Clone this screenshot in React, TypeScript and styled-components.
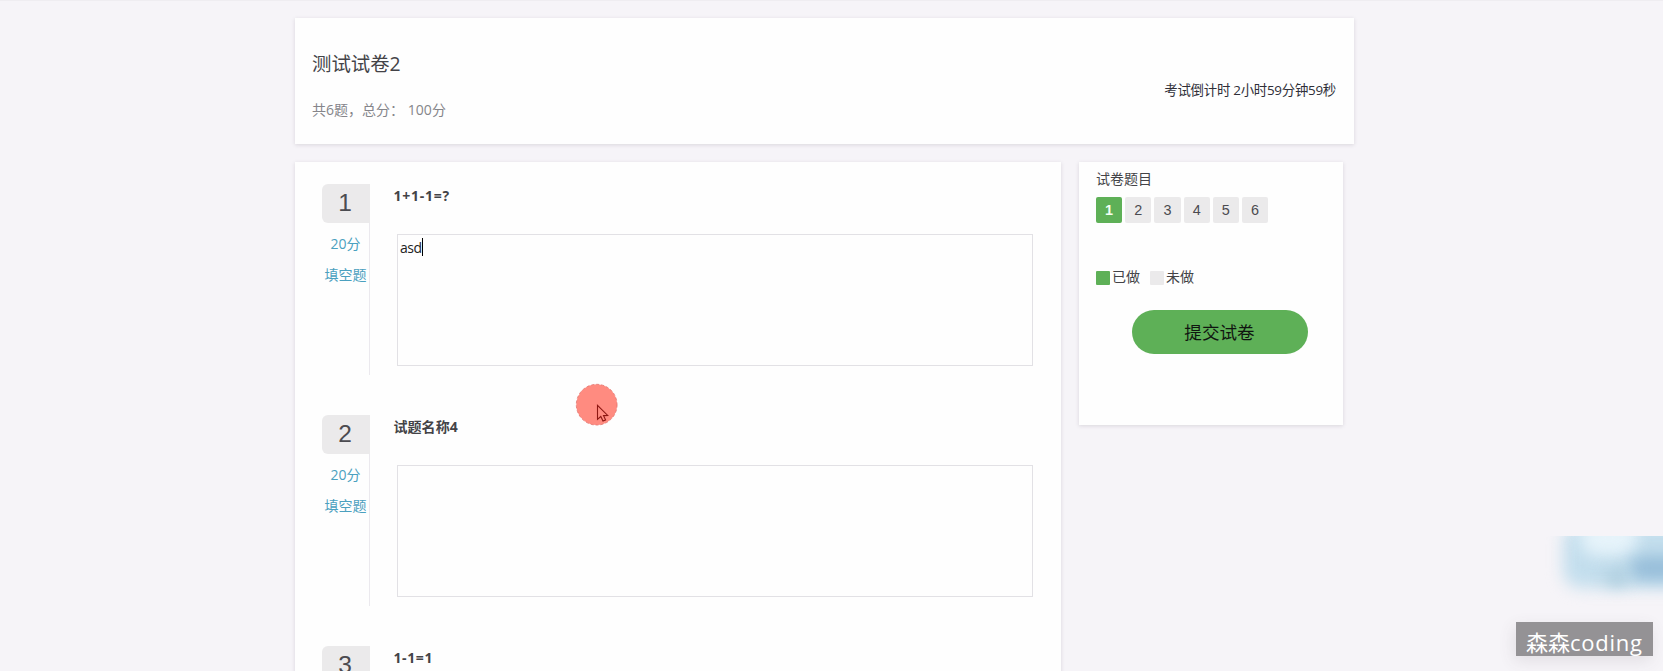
import React from "react";
import styled, { createGlobalStyle } from "styled-components";

const ui = `"Open Sans", "Noto Sans CJK SC", sans-serif`;
const green = "#5eb057";
const grey = "#ebeaeb";

const GlobalStyle = createGlobalStyle`
  * { box-sizing: border-box; }
  body { margin: 0; background: #f6f4f8; font-family: ${ui}; color: #434347; }
`;

const Page = styled.div`
  position: relative;
  height: 671px;
  overflow: hidden;
  padding: 17px 0 0 295px;
  background: #f6f4f8;
  border-top: 1px solid #efedf1;
`;

const Card = styled.section`
  background: #fefefe;
  box-shadow: 0 1px 4px rgba(60, 50, 70, 0.15);
`;

const Header = styled(Card)`
  width: 1059px;
  height: 126px;
  padding: 0 18px 0 17px;
  display: flex;
  justify-content: space-between;
`;

const Title = styled.h1`
  margin: 32px 0 0;
  font-size: 19.4px;
  line-height: 28px;
  font-weight: 400;
`;

const Summary = styled.p`
  margin: 22px 0 0;
  font-size: 14px;
  line-height: 20px;
  color: #85858a;
  white-space: pre;
  letter-spacing: 0.02px;
`;

const Countdown = styled.div`
  margin-top: 62px;
  font-size: 13.4px;
  line-height: 20px;
  letter-spacing: -0.25px;
  color: #2f2f38;
`;

const Columns = styled.div`
  display: flex;
  align-items: flex-start;
  gap: 18px;
  margin-top: 18px;
`;

const Paper = styled(Card)`
  width: 766px;
  padding: 22px 28px 0 27px;
`;

const Question = styled.article`
  display: flex;
  height: 231px;
`;

const Meta = styled.div`
  width: 48px;
  height: 191px;
  border-right: 1px solid #ebe9ee;
  text-align: center;
`;

const Badge = styled.div`
  height: 39px;
  margin-right: -1px;
  padding-right: 2px;
  border-radius: 6px 0 0 6px;
  background: ${grey};
  font: 24.5px/38px "Liberation Sans", sans-serif;
  color: #4b4b50;
`;

const MetaLine = styled.div<{ $gap: number }>`
  margin-top: ${(p) => p.$gap}px;
  font-size: 14px;
  line-height: 20px;
  color: #4ba0bf;
  white-space: nowrap;
`;

const Body = styled.div`
  flex: 1;
  padding-left: 24px;
`;

const Name = styled.h2<{ $spacing: number }>`
  margin: 2px 0 0 -0.5px;
  font-size: 14px;
  line-height: 20px;
  font-weight: 700;
  letter-spacing: ${(p) => p.$spacing}px;
`;

const Answer = styled.div`
  width: 636px;
  height: 132px;
  margin: 28px 0 0 3px;
  padding: 3px 2px;
  border: 1px solid #e2e1e5;
  display: flex;
  font-size: 14px;
  line-height: 20px;
  letter-spacing: -0.5px;
  color: #222;
`;

const Caret = styled.span`
  width: 1px;
  height: 18px;
  background: #000;
`;

const Side = styled(Card)`
  width: 264px;
  height: 263px;
  padding: 7px 17px 0;
`;

const SideTitle = styled.div`
  font-size: 14px;
  line-height: 20px;
`;

const Tiles = styled.div`
  display: flex;
  gap: 3px;
  margin-top: 8px;
`;

const Tile = styled.span<{ $done: boolean }>`
  width: 26.2px;
  height: 26px;
  border-radius: 2px;
  background: ${(p) => (p.$done ? green : grey)};
  color: ${(p) => (p.$done ? "#f4fff2" : "#4b4b50")};
  font: ${(p) => (p.$done ? 700 : 400)} 14.4px/26px "Liberation Sans", sans-serif;
  text-align: center;
`;

const Legend = styled.div`
  display: flex;
  margin-top: 44px;
  font-size: 14px;
  line-height: 20px;
`;

const LegendItem = styled.span`
  display: flex;
  width: 54px;
  gap: 2px;
`;

const Swatch = styled.i<{ $done: boolean }>`
  width: 14px;
  height: 14px;
  margin-top: 4px;
  border-radius: 1px;
  background: ${(p) => (p.$done ? green : grey)};
`;

const Submit = styled.button`
  display: block;
  width: 176px;
  height: 44px;
  margin: 23px 0 0 36px;
  padding: 0 1px 0 0;
  border: 0;
  border-radius: 22px;
  background: ${green};
  color: #101510;
  font: 17.6px/44px ${ui};
`;

const Pointer = styled.svg`
  position: absolute;
  left: 575px;
  top: 382px;
`;

const Haze = styled.div`
  position: absolute;
  right: 0;
  top: 535px;
  width: 123px;
  height: 80px;
  overflow: hidden;
`;

const Blob = styled.i<{ $x: number; $y: number; $w: number; $h: number; $c: string }>`
  position: absolute;
  left: ${(p) => p.$x}px;
  top: ${(p) => p.$y}px;
  width: ${(p) => p.$w}px;
  height: ${(p) => p.$h}px;
  border-radius: 18px;
  background: ${(p) => p.$c};
  filter: blur(8px);
`;

const Watermark = styled.div`
  position: absolute;
  left: 1516px;
  top: 621px;
  width: 137px;
  height: 34px;
  padding-left: 10px;
  background: #949295;
  box-shadow: -2px 5px 16px rgba(80, 70, 80, 0.12);
  color: #fff;
  font-size: 22px;
  line-height: 40px;
  white-space: nowrap;
`;

const Latin = styled.span`
  letter-spacing: 0.75px;
`;

interface QuestionData {
  name: string;
  spacing: number;
  answer?: string;
  points?: string;
  kind?: string;
}

const questions: QuestionData[] = [
  { name: "1+1-1=?", spacing: 0.75, answer: "asd", points: "20分", kind: "填空题" },
  { name: "试题名称4", spacing: 0.05, points: "20分", kind: "填空题" },
  { name: "1-1=1", spacing: 0.6 },
];

export default function App() {
  return (
    <Page>
      <GlobalStyle />
      <Header>
        <div>
          <Title>测试试卷2</Title>
          <Summary>共6题，总分： 100分</Summary>
        </div>
        <Countdown>考试倒计时 2小时59分钟59秒</Countdown>
      </Header>
      <Columns>
        <Paper>
          {questions.map((q, i) => (
            <Question key={q.name}>
              <Meta>
                <Badge>{i + 1}</Badge>
                {q.points && <MetaLine $gap={11}>{q.points}</MetaLine>}
                {q.kind && <MetaLine $gap={11}>{q.kind}</MetaLine>}
              </Meta>
              <Body>
                <Name $spacing={q.spacing}>{q.name}</Name>
                <Answer>
                  {q.answer}
                  {q.answer && <Caret />}
                </Answer>
              </Body>
            </Question>
          ))}
        </Paper>
        <Side>
          <SideTitle>试卷题目</SideTitle>
          <Tiles>
            {[1, 2, 3, 4, 5, 6].map((n) => (
              <Tile key={n} $done={n === 1}>{n}</Tile>
            ))}
          </Tiles>
          <Legend>
            <LegendItem><Swatch $done />已做</LegendItem>
            <LegendItem><Swatch $done={false} />未做</LegendItem>
          </Legend>
          <Submit>提交试卷</Submit>
        </Side>
      </Columns>
      <Pointer width="44" height="44" viewBox="0 0 44 44">
        <circle cx="21.7" cy="21.7" r="20.4" fill="#ff8b80" stroke="#dc6a64" strokeWidth="0.7" strokeDasharray="3 2" />
        <path d="M22.5 22.4v14l3.3-2.9 2.2 4.6 2.6-1.1-2.1-4.4 4.2-.2z" fill="#ff8b80" stroke="#8e1712" strokeWidth="1.1" />
      </Pointer>
      <Haze>
        <Blob $x={23} $y={-12} $w={130} $h={64} $c="#c3deed" />
        <Blob $x={40} $y={-16} $w={58} $h={36} $c="#e6f3fa" />
        <Blob $x={90} $y={20} $w={60} $h={24} $c="#96bdd9" />
        <Blob $x={66} $y={34} $w={22} $h={16} $c="#abcbdc" />
      </Haze>
      <Watermark>森森<Latin>coding</Latin></Watermark>
    </Page>
  );
}
